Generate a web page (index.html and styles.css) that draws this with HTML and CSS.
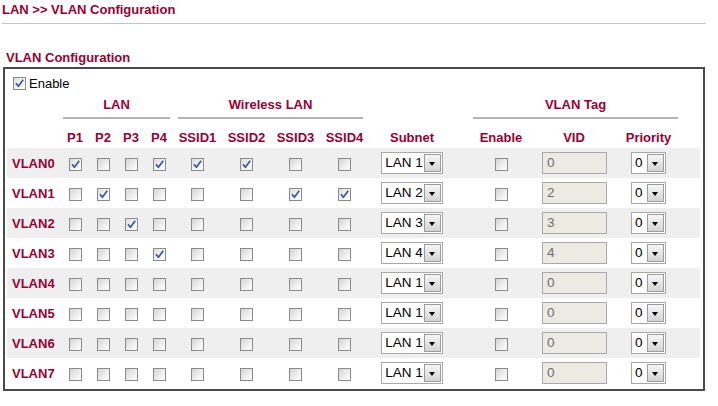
FILE: index.html
```html
<!DOCTYPE html>
<html>
<head>
<meta charset="utf-8">
<title>VLAN Configuration</title>
<link rel="stylesheet" href="styles.css">
</head>
<body>
<svg class="defs" width="0" height="0" aria-hidden="true">
  <symbol id="tick" viewBox="0 0 11 11">
    <path d="M2 5.2 L4.4 8.3 L9.2 1.8" fill="none" stroke="#3b56a2" stroke-width="1.7" stroke-linejoin="round"/>
  </symbol>
</svg>
<div class="page">
  <div class="crumb">LAN &gt;&gt; VLAN Configuration</div>
  <div class="section-title">VLAN Configuration</div>
  <div class="box">
    <div class="enable-row"><span class="cb on"><svg><use href="#tick"/></svg></span><span class="enable-label">Enable</span></div>

    <div class="grid group-head">
      <div class="g-lan"><span>LAN</span></div>
      <div class="g-wl"><span>Wireless LAN</span></div>
      <div class="g-tag"><span>VLAN Tag</span></div>
    </div>

    <div class="grid col-head">
      <div></div>
      <div>P1</div><div>P2</div><div>P3</div><div>P4</div>
      <div>SSID1</div><div>SSID2</div><div>SSID3</div><div>SSID4</div>
      <div class="c-subnet">Subnet</div>
      <div>Enable</div>
      <div>VID</div>
      <div>Priority</div>
    </div>

    <div class="grid row alt">
      <div class="lbl">VLAN0</div>
      <div><span class="cb on"><svg><use href="#tick"/></svg></span></div><div><span class="cb"></span></div><div><span class="cb"></span></div><div><span class="cb on"><svg><use href="#tick"/></svg></span></div>
      <div><span class="cb on"><svg><use href="#tick"/></svg></span></div><div><span class="cb on"><svg><use href="#tick"/></svg></span></div><div><span class="cb"></span></div><div><span class="cb"></span></div>
      <div class="c-subnet"><span class="sel subnet"><span class="val">LAN 1</span><span class="btn"></span></span></div>
      <div><span class="cb"></span></div>
      <div><span class="vid">0</span></div>
      <div><span class="sel prio"><span class="val">0</span><span class="btn"></span></span></div>
    </div>

    <div class="grid row">
      <div class="lbl">VLAN1</div>
      <div><span class="cb"></span></div><div><span class="cb on"><svg><use href="#tick"/></svg></span></div><div><span class="cb"></span></div><div><span class="cb"></span></div>
      <div><span class="cb"></span></div><div><span class="cb"></span></div><div><span class="cb on"><svg><use href="#tick"/></svg></span></div><div><span class="cb on"><svg><use href="#tick"/></svg></span></div>
      <div class="c-subnet"><span class="sel subnet"><span class="val">LAN 2</span><span class="btn"></span></span></div>
      <div><span class="cb"></span></div>
      <div><span class="vid">2</span></div>
      <div><span class="sel prio"><span class="val">0</span><span class="btn"></span></span></div>
    </div>

    <div class="grid row alt">
      <div class="lbl">VLAN2</div>
      <div><span class="cb"></span></div><div><span class="cb"></span></div><div><span class="cb on"><svg><use href="#tick"/></svg></span></div><div><span class="cb"></span></div>
      <div><span class="cb"></span></div><div><span class="cb"></span></div><div><span class="cb"></span></div><div><span class="cb"></span></div>
      <div class="c-subnet"><span class="sel subnet"><span class="val">LAN 3</span><span class="btn"></span></span></div>
      <div><span class="cb"></span></div>
      <div><span class="vid">3</span></div>
      <div><span class="sel prio"><span class="val">0</span><span class="btn"></span></span></div>
    </div>

    <div class="grid row">
      <div class="lbl">VLAN3</div>
      <div><span class="cb"></span></div><div><span class="cb"></span></div><div><span class="cb"></span></div><div><span class="cb on"><svg><use href="#tick"/></svg></span></div>
      <div><span class="cb"></span></div><div><span class="cb"></span></div><div><span class="cb"></span></div><div><span class="cb"></span></div>
      <div class="c-subnet"><span class="sel subnet"><span class="val">LAN 4</span><span class="btn"></span></span></div>
      <div><span class="cb"></span></div>
      <div><span class="vid">4</span></div>
      <div><span class="sel prio"><span class="val">0</span><span class="btn"></span></span></div>
    </div>

    <div class="grid row alt">
      <div class="lbl">VLAN4</div>
      <div><span class="cb"></span></div><div><span class="cb"></span></div><div><span class="cb"></span></div><div><span class="cb"></span></div>
      <div><span class="cb"></span></div><div><span class="cb"></span></div><div><span class="cb"></span></div><div><span class="cb"></span></div>
      <div class="c-subnet"><span class="sel subnet"><span class="val">LAN 1</span><span class="btn"></span></span></div>
      <div><span class="cb"></span></div>
      <div><span class="vid">0</span></div>
      <div><span class="sel prio"><span class="val">0</span><span class="btn"></span></span></div>
    </div>

    <div class="grid row">
      <div class="lbl">VLAN5</div>
      <div><span class="cb"></span></div><div><span class="cb"></span></div><div><span class="cb"></span></div><div><span class="cb"></span></div>
      <div><span class="cb"></span></div><div><span class="cb"></span></div><div><span class="cb"></span></div><div><span class="cb"></span></div>
      <div class="c-subnet"><span class="sel subnet"><span class="val">LAN 1</span><span class="btn"></span></span></div>
      <div><span class="cb"></span></div>
      <div><span class="vid">0</span></div>
      <div><span class="sel prio"><span class="val">0</span><span class="btn"></span></span></div>
    </div>

    <div class="grid row alt">
      <div class="lbl">VLAN6</div>
      <div><span class="cb"></span></div><div><span class="cb"></span></div><div><span class="cb"></span></div><div><span class="cb"></span></div>
      <div><span class="cb"></span></div><div><span class="cb"></span></div><div><span class="cb"></span></div><div><span class="cb"></span></div>
      <div class="c-subnet"><span class="sel subnet"><span class="val">LAN 1</span><span class="btn"></span></span></div>
      <div><span class="cb"></span></div>
      <div><span class="vid">0</span></div>
      <div><span class="sel prio"><span class="val">0</span><span class="btn"></span></span></div>
    </div>

    <div class="grid row">
      <div class="lbl">VLAN7</div>
      <div><span class="cb"></span></div><div><span class="cb"></span></div><div><span class="cb"></span></div><div><span class="cb"></span></div>
      <div><span class="cb"></span></div><div><span class="cb"></span></div><div><span class="cb"></span></div><div><span class="cb"></span></div>
      <div class="c-subnet"><span class="sel subnet"><span class="val">LAN 1</span><span class="btn"></span></span></div>
      <div><span class="cb"></span></div>
      <div><span class="vid">0</span></div>
      <div><span class="sel prio"><span class="val">0</span><span class="btn"></span></span></div>
    </div>
  </div>
</div>
</body>
</html>
```

FILE: styles.css
```css
html, body {
  margin: 0;
  padding: 0;
  background: #ffffff;
}

body {
  font-family: "Liberation Sans", Arial, sans-serif;
  font-size: 13px;
  color: #000;
}

.defs {
  position: absolute;
  width: 0;
  height: 0;
}

.page {
  width: 706px;
  padding: 0 0 0 2px;
}

.crumb {
  font-weight: bold;
  color: #990033;
  line-height: 20px;
  height: 24px;
  box-sizing: border-box;
  border-bottom: 1px solid #c4c4c4;
  width: 704px;
}

.section-title {
  font-weight: bold;
  color: #990033;
  line-height: 16px;
  margin-top: 26px;
  padding-left: 4px;
}

.box {
  margin-top: 1px;
  margin-left: 1px;
  width: 702px;
  box-sizing: border-box;
  border: 2px solid #4a4a4a;
  padding: 0 3px 1px 2px;
}

.enable-row {
  display: flex;
  align-items: center;
  height: 28px;
  padding-left: 6px;
  gap: 3px;
  padding-top: 1px;
  box-sizing: border-box;
}

.enable-label {
  line-height: 16px;
}

.grid {
  display: grid;
  grid-template-columns: 54px repeat(4, 28px) repeat(4, 49px) 92px 80px 66px 83px;
  align-items: center;
  justify-items: center;
}

.group-head {
  height: 22px;
  font-weight: bold;
  color: #990033;
}

.group-head > div {
  align-self: stretch;
  justify-self: stretch;
  display: flex;
  justify-content: center;
  align-items: flex-start;
  border-bottom: 2px solid #b4b4b4;
  height: 20px;
  line-height: 15px;
}

.g-lan {
  grid-column: 2 / 6;
  margin: 0 3px 0 2px;
}

.g-wl {
  grid-column: 6 / 10;
  margin: 0 6px 0 5px;
}

.g-tag {
  grid-column: 11 / 14;
  margin: 0 12px;
}

.col-head {
  height: 29px;
  box-sizing: border-box;
  padding-top: 8px;
  font-weight: bold;
  color: #990033;
}

.c-subnet {
  justify-self: start !important;
  margin-left: 12px;
  width: 62px;
  text-align: center;
}

.row {
  height: 30px;
}

.row.alt {
  background: #efefef;
}

.lbl {
  justify-self: start !important;
  padding-left: 5px;
  font-weight: bold;
  color: #990033;
}

.cb {
  display: inline-block;
  width: 13px;
  height: 13px;
  box-sizing: border-box;
  border: 1px solid #8b8b8b;
  background: linear-gradient(135deg, #d4d4d4 0%, #f0f0f0 60%, #ffffff 100%);
  vertical-align: middle;
}

.cb svg {
  display: block;
  width: 11px;
  height: 11px;
}

.cb.on {
  background: linear-gradient(135deg, #dcdcdc 0%, #f4f4f4 60%, #ffffff 100%);
}

.sel {
  display: flex;
  height: 22px;
  box-sizing: border-box;
  border: 1px solid #a8a8a8;
  background: #fff;
  align-items: stretch;
}

.sel .val {
  flex: 1;
  line-height: 20px;
  padding-left: 3px;
  font-size: 13.5px;
  white-space: nowrap;
  overflow: hidden;
}

.sel .btn {
  width: 17px;
  flex: none;
  margin: 1px;
  box-sizing: border-box;
  border: 1px solid #9c9c9c;
  background: linear-gradient(#f6f6f6, #d4d4d4);
  position: relative;
}

.sel .btn::after {
  content: "";
  position: absolute;
  left: 4px;
  top: 7px;
  border-left: 3.5px solid transparent;
  border-right: 3.5px solid transparent;
  border-top: 4px solid #000;
}

.subnet {
  width: 62px;
}

.prio {
  width: 35px;
}

.vid {
  display: block;
  width: 65px;
  height: 22px;
  box-sizing: border-box;
  border: 1px solid #a9a9a9;
  background: #ebebe4;
  color: #6d6d6d;
  line-height: 20px;
  padding-left: 4px;
  font-size: 13.5px;
  margin-left: 1px;
}
```
